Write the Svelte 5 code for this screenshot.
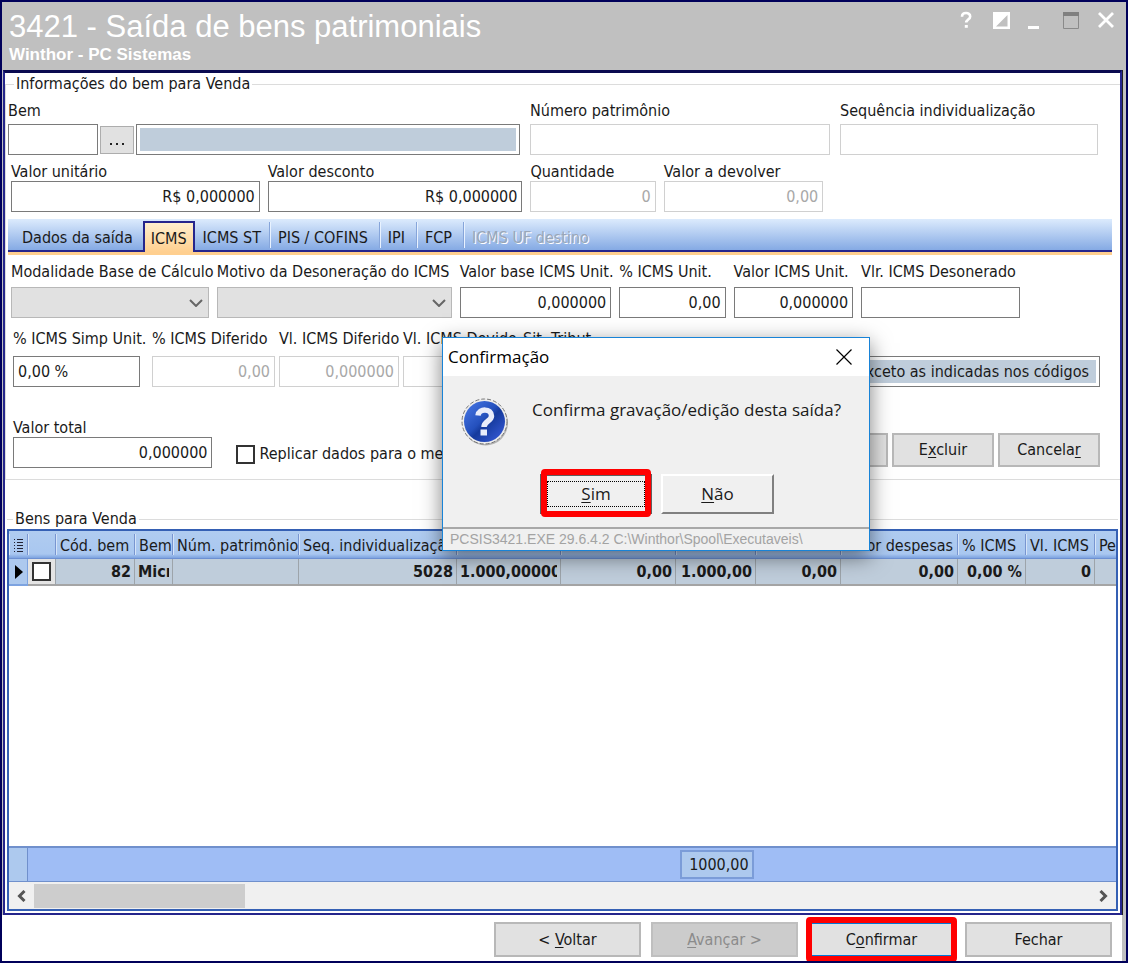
<script>
  let replicate = $state(false);
  let rowChecked = $state(false);

  const columns = [
    { title: '', width: 19 },
    { title: '', width: 28 },
    { title: 'Cód. bem', width: 79, value: '82', num: true },
    { title: 'Bem', width: 38, value: 'Micro' },
    { title: 'Núm. patrimônio', width: 126, value: '' },
    { title: 'Seq. individualização', width: 158, value: '5028', num: true },
    { title: 'Valor unitário', width: 104, value: '1.000,000000' },
    { title: 'Valor desconto', width: 115, value: '0,00', num: true },
    { title: 'Valor item', width: 80, value: '1.000,00', num: true },
    { title: 'Valor frete', width: 85, value: '0,00', num: true },
    { title: 'Valor despesas', width: 117, value: '0,00', num: true },
    { title: '% ICMS', width: 68, value: '0,00 %', num: true },
    { title: 'Vl. ICMS', width: 69, value: '0', num: true },
    { title: 'Pe', width: 22, value: '' }
  ];
</script>

{#snippet field(id, label, value, kind)}
  <div class="field">
    <label for={id}>{label}</label>
    <input {id} type="text" class={kind} {value} disabled={kind === 'off'} />
  </div>
{/snippet}

{#snippet combo(id, label)}
  <div class="field">
    <label for={id}>{label}</label>
    <div class="combo">
      <select {id} disabled><option></option></select>
      <svg viewBox="0 0 14 8" width="14" height="8" aria-hidden="true"><path d="M1 1l6 6 6-6" fill="none" stroke="#666" stroke-width="2" /></svg>
    </div>
  </div>
{/snippet}

<main class="window">
  <header>
    <div>
      <h1>3421 - Saída de bens patrimoniais</h1>
      <p>Winthor - PC Sistemas</p>
    </div>
    <div class="controls">
      <button aria-label="Ajuda"><svg viewBox="0 0 18 18"><path d="M5 5.800C5 .8 13.200 1 13.200 5.400c0 3-4 3.200-4 6.200" fill="none" stroke="#fff" stroke-width="2.600" /><path d="M7.800 14h3v2.800h-3z" fill="#fff" /></svg></button>
      <button aria-label="Tema"><svg viewBox="0 0 18 18"><path d="M1 1h17v17H1z" fill="#fff" /><path d="M15.500 4v11.500H4z" fill="#c0c0c0" /></svg></button>
      <button aria-label="Minimizar"><svg viewBox="0 0 18 18"><path d="M1 15h11v3H1z" fill="#fff" /></svg></button>
      <button aria-label="Maximizar"><svg viewBox="0 0 18 18"><path d="M1.500 2h15v15.500h-15z" fill="none" stroke="#8a8a8a" /><path d="M1 1h16v4H1z" fill="#808080" /></svg></button>
      <button aria-label="Fechar janela"><svg viewBox="0 0 18 18"><path d="M2 2l14 14M16 2L2 16" stroke="#fff" stroke-width="2.800" /></svg></button>
    </div>
  </header>

  <section class="panel">
    <fieldset class="info">
      <legend>Informações do bem para Venda</legend>

      <div class="row asset">
        <div class="field">
          <label for="bem">Bem</label>
          <div class="lookup">
            <input id="bem" type="text" />
            <button class="dots" aria-label="Pesquisar bem"><svg viewBox="0 0 18 4" width="18" height="4"><path d="M2 1h2v2H2zM8 1h2v2H8zM14 1h2v2h-2z" fill="#222" /></svg></button>
            <input class="locked" type="text" readonly aria-label="Descrição do bem" />
          </div>
        </div>
        {@render field('num', 'Número patrimônio', '', 'off')}
        {@render field('seq', 'Sequência individualização', '', 'off')}
      </div>

      <div class="row values">
        {@render field('vu', 'Valor unitário', 'R$ 0,000000', 'num')}
        {@render field('vd', 'Valor desconto', 'R$ 0,000000', 'num')}
        {@render field('qt', 'Quantidade', '0', 'off')}
        {@render field('dev', 'Valor a devolver', '0,00', 'off')}
      </div>

      <nav>
        <button>Dados da saída</button>
        <button class="active">ICMS</button>
        <button>ICMS ST</button>
        <button class="sep">PIS / COFINS</button>
        <button class="sep">IPI</button>
        <button class="sep">FCP</button>
        <button class="sep" disabled>ICMS UF destino</button>
      </nav>

      <div class="row icms">
        {@render combo('mod', 'Modalidade Base de Cálculo')}
        {@render combo('mot', 'Motivo da Desoneração do ICMS')}
        {@render field('vb', 'Valor base ICMS Unit.', '0,000000', 'num')}
        {@render field('pi', '% ICMS Unit.', '0,00', 'num')}
        {@render field('vi', 'Valor ICMS Unit.', '0,000000', 'num')}
        {@render field('vde', 'Vlr. ICMS Desonerado', '', 'num')}
      </div>

      <div class="row simp">
        {@render field('sp', '% ICMS Simp Unit.', '0,00 %', '')}
        {@render field('pd', '% ICMS Diferido', '0,00', 'off')}
        {@render field('vdf', 'Vl. ICMS Diferido', '0,000000', 'off')}
        {@render field('vdv', 'Vl. ICMS Devido', '0,000000', 'off')}
        {@render field('st', 'Sit. Tribut.', '', 'num')}
        <div class="field bottom">
          <input class="locked num" type="text" readonly aria-label="Descrição da situação tributária" value="exceto as indicadas nos códigos" />
        </div>
      </div>

      <div class="row total">
        {@render field('vt', 'Valor total', '0,000000', 'num')}
        <label class="check"><input type="checkbox" bind:checked={replicate} /><span>Replicar dados para o mesmo bem</span></label>
        <div class="actions">
          <button class="btn"><u>G</u>ravar</button>
          <button class="btn">E<u>x</u>cluir</button>
          <button class="btn">Cancela<u>r</u></button>
        </div>
      </div>
    </fieldset>

    <section class="list" aria-labelledby="sale">
      <h2 id="sale">Bens para Venda</h2>
      <div class="grid">
        <table>
          <colgroup>
            {#each columns as c}<col style:width="{c.width}px" />{/each}
          </colgroup>
          <thead>
            <tr>
              {#each columns as c, i}
                <th scope="col">
                  {#if i === 0}
                    <svg viewBox="0 0 12 16" width="12" height="16" aria-hidden="true"><path d="M2 1.500h1M5 1.500h6M2 4.500h1M5 4.500h6M2 7.500h1M5 7.500h6M2 10.500h1M5 10.500h6M2 13.500h1M5 13.500h6" stroke="#223" /></svg>
                  {:else}{c.title}{/if}
                </th>
              {/each}
            </tr>
          </thead>
          <tbody>
            <tr>
              {#each columns as c, i}
                <td class:right={c.num} class:mark={i === 0} class:tick={i === 1}>
                  {#if i === 0}
                    <svg viewBox="0 0 8 14" width="8" height="14" aria-hidden="true"><path d="M0 0l8 7-8 7z" fill="#000" /></svg>
                  {:else if i === 1}
                    <input type="checkbox" bind:checked={rowChecked} aria-label="Selecionar bem 82" />
                  {:else}<div class="cell">{c.value}</div>{/if}
                </td>
              {/each}
            </tr>
          </tbody>
        </table>
        <div class="summary"><span class="stub"></span><output>1000,00</output></div>
        <div class="scroll">
          <button aria-label="Rolar para a esquerda"><svg viewBox="0 0 10 12" width="10" height="12"><path d="M7.500 1l-5 5 5 5" fill="none" stroke="#555" stroke-width="3" /></svg></button>
          <div class="track"><div class="thumb"></div></div>
          <button aria-label="Rolar para a direita"><svg viewBox="0 0 10 12" width="10" height="12"><path d="M1.500 1l5 5-5 5" fill="none" stroke="#555" stroke-width="3" /></svg></button>
        </div>
      </div>
    </section>
  </section>

  <footer>
    <button class="btn">&lt; <u>V</u>oltar</button>
    <button class="btn" disabled><u>A</u>vançar &gt;</button>
    <button class="btn primary">C<u>o</u>nfirmar</button>
    <button class="btn">Fechar</button>
  </footer>

  <div class="dialog" role="dialog" aria-labelledby="dlg">
    <div class="caption">
      <h2 id="dlg">Confirmação</h2>
      <button aria-label="Fechar"><svg viewBox="0 0 16 16" width="16" height="16"><path d="M.5.5l15 15M15.500.5l-15 15" stroke="#000" stroke-width="1.200" /></svg></button>
    </div>
    <div class="message">
      <svg viewBox="0 0 48 50" width="48" height="50" aria-hidden="true">
        <defs>
          <linearGradient id="ball" x1="0" y1="0" x2="1" y2="1">
            <stop offset="0" stop-color="#4a7ae8" /><stop offset=".45" stop-color="#2450bd" /><stop offset=".55" stop-color="#153a9c" /><stop offset="1" stop-color="#3c5fe0" />
          </linearGradient>
        </defs>
        <circle cx="24.500" cy="25" r="22.500" fill="#b4b4b4" />
        <circle cx="23.500" cy="23.500" r="22.500" fill="#ededed" stroke="#777" stroke-dasharray="4 2" />
        <circle cx="23.500" cy="23.500" r="20.500" fill="url(#ball)" />
        <path d="M17 17.500c1-7.500 13.500-7 13.500.5 0 5-7.500 5-7.500 11" fill="none" stroke="#e8ecfa" stroke-width="5.500" />
        <path d="M19.500 31.500h6.500v6h-6.500z" fill="#e8ecfa" />
      </svg>
      <p>Confirma gravação/edição desta saída?</p>
    </div>
    <div class="answers">
      <button class="yes"><u>S</u>im</button>
      <button><u>N</u>ão</button>
    </div>
    <div class="status">PCSIS3421.EXE 29.6.4.2 C:\Winthor\Spool\Executaveis\</div>
  </div>
</main>

<style>
  :global(body) { margin: 0; background: #00005a; }
  * { box-sizing: border-box; }
  .window {
    position: relative;
    min-height: 100vh;
    display: flex;
    flex-direction: column;
    border: 2px solid #00005a;
    background: #c0c0c0;
    font: 16px/18px "DejaVu Sans Condensed", "DejaVu Sans", sans-serif;
    color: #1a1a1a;
    overflow: hidden;
  }
  button, input, select { font: inherit; color: inherit; margin: 0; }
  button { padding: 0; }
  u { text-underline-offset: 2px; }

  header { height: 68px; display: flex; justify-content: space-between; padding: 8px 11px 0 7px; color: #fff; }
  h1 { margin: 0; font: 31px/34px "Liberation Sans", Arial, sans-serif; }
  header p { margin: 1px 0 0; font: bold 17px/20px "Liberation Sans", Arial, sans-serif; }
  .controls { display: flex; gap: 17px; }
  .controls button { width: 18px; height: 18px; margin-top: 1px; border: 0; background: none; }
  .controls svg { display: block; width: 18px; height: 18px; }

  .panel {
    flex: 1;
    display: flex;
    flex-direction: column;
    margin: 0 4px 0 1px;
    border: 2px solid #25258c;
    border-top: 3px solid #0a0a50;
    background: #fff;
    box-shadow: 1px 0 #222;
    padding-top: 2px;
  }
  fieldset { margin: 0; min-width: 0; border: 1px solid #dcdcdc; border-width: 1px 0 1px 1px; }
  legend { padding: 0 2px; margin-left: 6px; }
  .info { padding: 9px 8px 11px 2px; }
  .row { display: grid; column-gap: 8px; padding-left: 3px; }
  .field { display: flex; flex-direction: column; min-width: 0; }
  label { white-space: nowrap; }
  .field input, .combo select {
    width: 100%;
    min-width: 0;
    height: 31px;
    border: 1px solid #7a7a7a;
    border-radius: 0;
    background: #fff;
    padding: 0 4px;
    outline: 0;
  }
  .field .num, .field .off { text-align: right; }
  .field .off { border-color: #d0d0d0; color: #a8a8a8; }
  .field .locked { background: #bfcddb; border: 1px solid #7a7a7a; box-shadow: inset 0 0 0 3px #fff; padding: 0 10px; }
  .combo { position: relative; }
  .combo select { display: block; appearance: none; opacity: 1; background: #e1e1e1; border-color: #b8b8b8; }
  .combo svg { position: absolute; right: 6px; top: 12px; }

  .asset { grid-template-columns: 512fr 300fr 258fr 4fr; padding-left: 0; column-gap: 10px; }
  .asset .field { gap: 4px; }
  .lookup { display: grid; grid-template-columns: 90fr 34fr 383fr; gap: 2px; }
  .dots { height: 28px; align-self: center; border: 1px solid #adadad; background: #e1e1e1; }
  .dots svg { display: block; margin: 8px auto 0; }
  .values { grid-template-columns: 248fr 254fr 125fr 159fr 280fr; margin-top: 8px; }

  nav {
    display: flex;
    height: 36px;
    margin-top: 7px;
    padding: 0 0 0 6px;
    background: linear-gradient(#dcebfd, #85aae4 31px, #25258c 31px, #25258c 33px, #ffcf8f 33px);
  }
  nav button { height: 26px; margin-top: 3px; border: 0; background: none; padding: 5px 8px 0; line-height: 18px; white-space: nowrap; }
  nav button:first-child { padding-right: 10px; }
  nav button.active { height: 31px; margin-top: 2px; padding: 2px 6px 0; background: linear-gradient(#ffefcd, #ffcf8f); border: 2px solid #25258c; border-bottom: 0; }
  nav button.sep { padding: 5px 11px 0 8px; border-left: 1px solid #86a5da; box-shadow: inset 1px 0 #e8f2ff; }
  nav button:disabled { color: #9aa6b8; text-shadow: 1px 1px #fff; }

  .icms { grid-template-columns: 197fr 234fr 151fr 106fr 119fr 158fr 84fr; margin-top: 8px; }
  .icms .field { gap: 6px; }
  .simp { grid-template-columns: 135fr 123fr 120fr 116fr 60fr 513fr; column-gap: 4px; margin-top: 12px; padding: 0 12px 0 5px; }
  .simp .field { gap: 8px; }
  .simp .field:first-child { padding-right: 8px; }
  .simp .bottom { justify-content: flex-end; }
  .total { grid-template-columns: 201fr 300fr 546fr; column-gap: 24px; margin-top: 32px; padding: 0 12px 0 5px; }
  .check { display: flex; align-items: center; gap: 4px; align-self: end; margin-bottom: 4px; height: 20px; }
  input[type='checkbox'] { appearance: none; width: 19px; height: 19px; flex: none; border: 2px solid #333; background: #fff; }
  input[type='checkbox']:checked { background: #333; box-shadow: inset 0 0 0 3px #fff; }
  .actions { display: flex; justify-content: flex-end; gap: 4px; padding-top: 14px; }
  .btn { border: 2px solid #b8b8b8; background: #e1e1e1; }
  .actions .btn { width: 102px; height: 34px; }
  .btn:disabled { background: #cccccc; border-color: #bfbfbf; color: #8b8b8b; }

  .list { flex: 1; display: flex; flex-direction: column; margin-top: 30px; padding: 0 2px 2px; }
  .list h2 { display: flex; align-items: center; gap: 2px; margin: 0 0 1px; font: inherit; }
  .list h2::before, .list h2::after { content: ''; width: 6px; height: 1px; background: #dcdcdc; }
  .list h2::after { flex: 1; }
  .grid { flex: 1; display: flex; flex-direction: column; border: 2px solid #3560b4; overflow: hidden; background: #fff; }
  table { width: 100%; table-layout: fixed; border-collapse: separate; border-spacing: 0; }
  th, td { overflow: hidden; white-space: nowrap; padding: 0 3px; }
  th {
    height: 28px;
    padding: 2px 0 0 4px;
    font-weight: normal;
    text-align: left;
    background:
      linear-gradient(#d5e4f8, #d5e4f8) 0 3px / 1px 21px no-repeat,
      linear-gradient(#7895d0, #7895d0) 100% 3px / 1px 21px no-repeat,
      linear-gradient(#b0ccf0, #a9c7f0 23px, #7da3e0);
    border-bottom: 1px solid #6d90d2;
  }
  th:first-child { padding-left: 3px; }
  th svg { display: block; }
  td { height: 27px; font-weight: bold; background: #bfcddb; border-right: 1px solid #9da4aa; border-bottom: 2px solid #a5a5a5; }
  .cell { overflow: hidden; }
  td.right { text-align: right; }
  td.mark { background: #adc9ee; border-color: #7da3e0; padding: 0 0 0 6px; }
  td.mark svg { display: block; }
  td.tick { background: #e4e4e4; padding: 0 0 0 4px; }
  td.tick input { display: block; }
  .summary {
    display: grid;
    grid-template-columns: 19px 651fr 74fr 362fr;
    align-items: center;
    height: 36px;
    margin-top: auto;
    background: #9fbdf5;
    border: solid #7090cc;
    border-width: 2px 0 1px;
  }
  .stub { align-self: stretch; background: #adc9ee; border-right: 1px solid #7090cc; }
  output { grid-column: 3; height: 29px; border: 2px solid #7b9cd8; background: #adc9ee; line-height: 25px; text-align: right; padding: 0 3px; }
  .scroll { display: flex; height: 27px; background: #f0f0f0; }
  .scroll button { width: 25px; border: 0; background: none; }
  .scroll svg { display: block; margin: auto; }
  .track { flex: 1; padding: 2px 0 1px; }
  .thumb { width: 20%; height: 100%; background: #cdcdcd; }

  footer { display: flex; justify-content: flex-end; gap: 10px; margin-right: 4px; padding: 7px 10px 4px; background: #fff; }
  footer .btn { width: 147px; height: 35px; }
  footer .primary { position: relative; border-color: #0078d7; }
  .primary::after, .yes::after { content: ''; position: absolute; inset: -7px -4px; border: 6px solid #f00; border-radius: 4px; pointer-events: none; }
  .yes::after { inset: -7px -1px -5px; }

  .dialog {
    position: absolute;
    left: 440px;
    top: 335px;
    width: 428px;
    border: 1px solid #1883d7;
    background: #f0f0f0;
    box-shadow: 0 6px 20px rgba(0, 0, 0, .5);
  }
  .caption { display: flex; justify-content: space-between; align-items: center; height: 38px; padding: 0 17px 0 5px; background: #fff; }
  .caption h2 { margin: 0; font: 17px/24px "Open Sans", sans-serif; color: #000; }
  .caption button { border: 0; background: none; }
  .caption svg { display: block; }
  .message { display: flex; gap: 23px; padding: 22px 0 0 18px; height: 98px; }
  .message p { margin: 0; font: 17px/24px "Open Sans", sans-serif; white-space: nowrap; }
  .answers { display: flex; gap: 8px; padding-left: 97px; }
  .answers button { position: relative; width: 113px; height: 40px; font: 17px/24px "Open Sans", sans-serif; background: #f0f0f0; border: 2px solid; border-color: #fff #808080 #808080 #fff; }
  .answers .yes { width: 112px; margin-right: 1px; border-color: #606060; outline: 1px dotted #000; outline-offset: -8px; }
  .status { margin-top: 13px; padding: 0 7px; border-top: 2px solid #a8a8a8; font: 14px/21px "Liberation Sans", Arial, sans-serif; color: #a3a3a3; }
</style>
